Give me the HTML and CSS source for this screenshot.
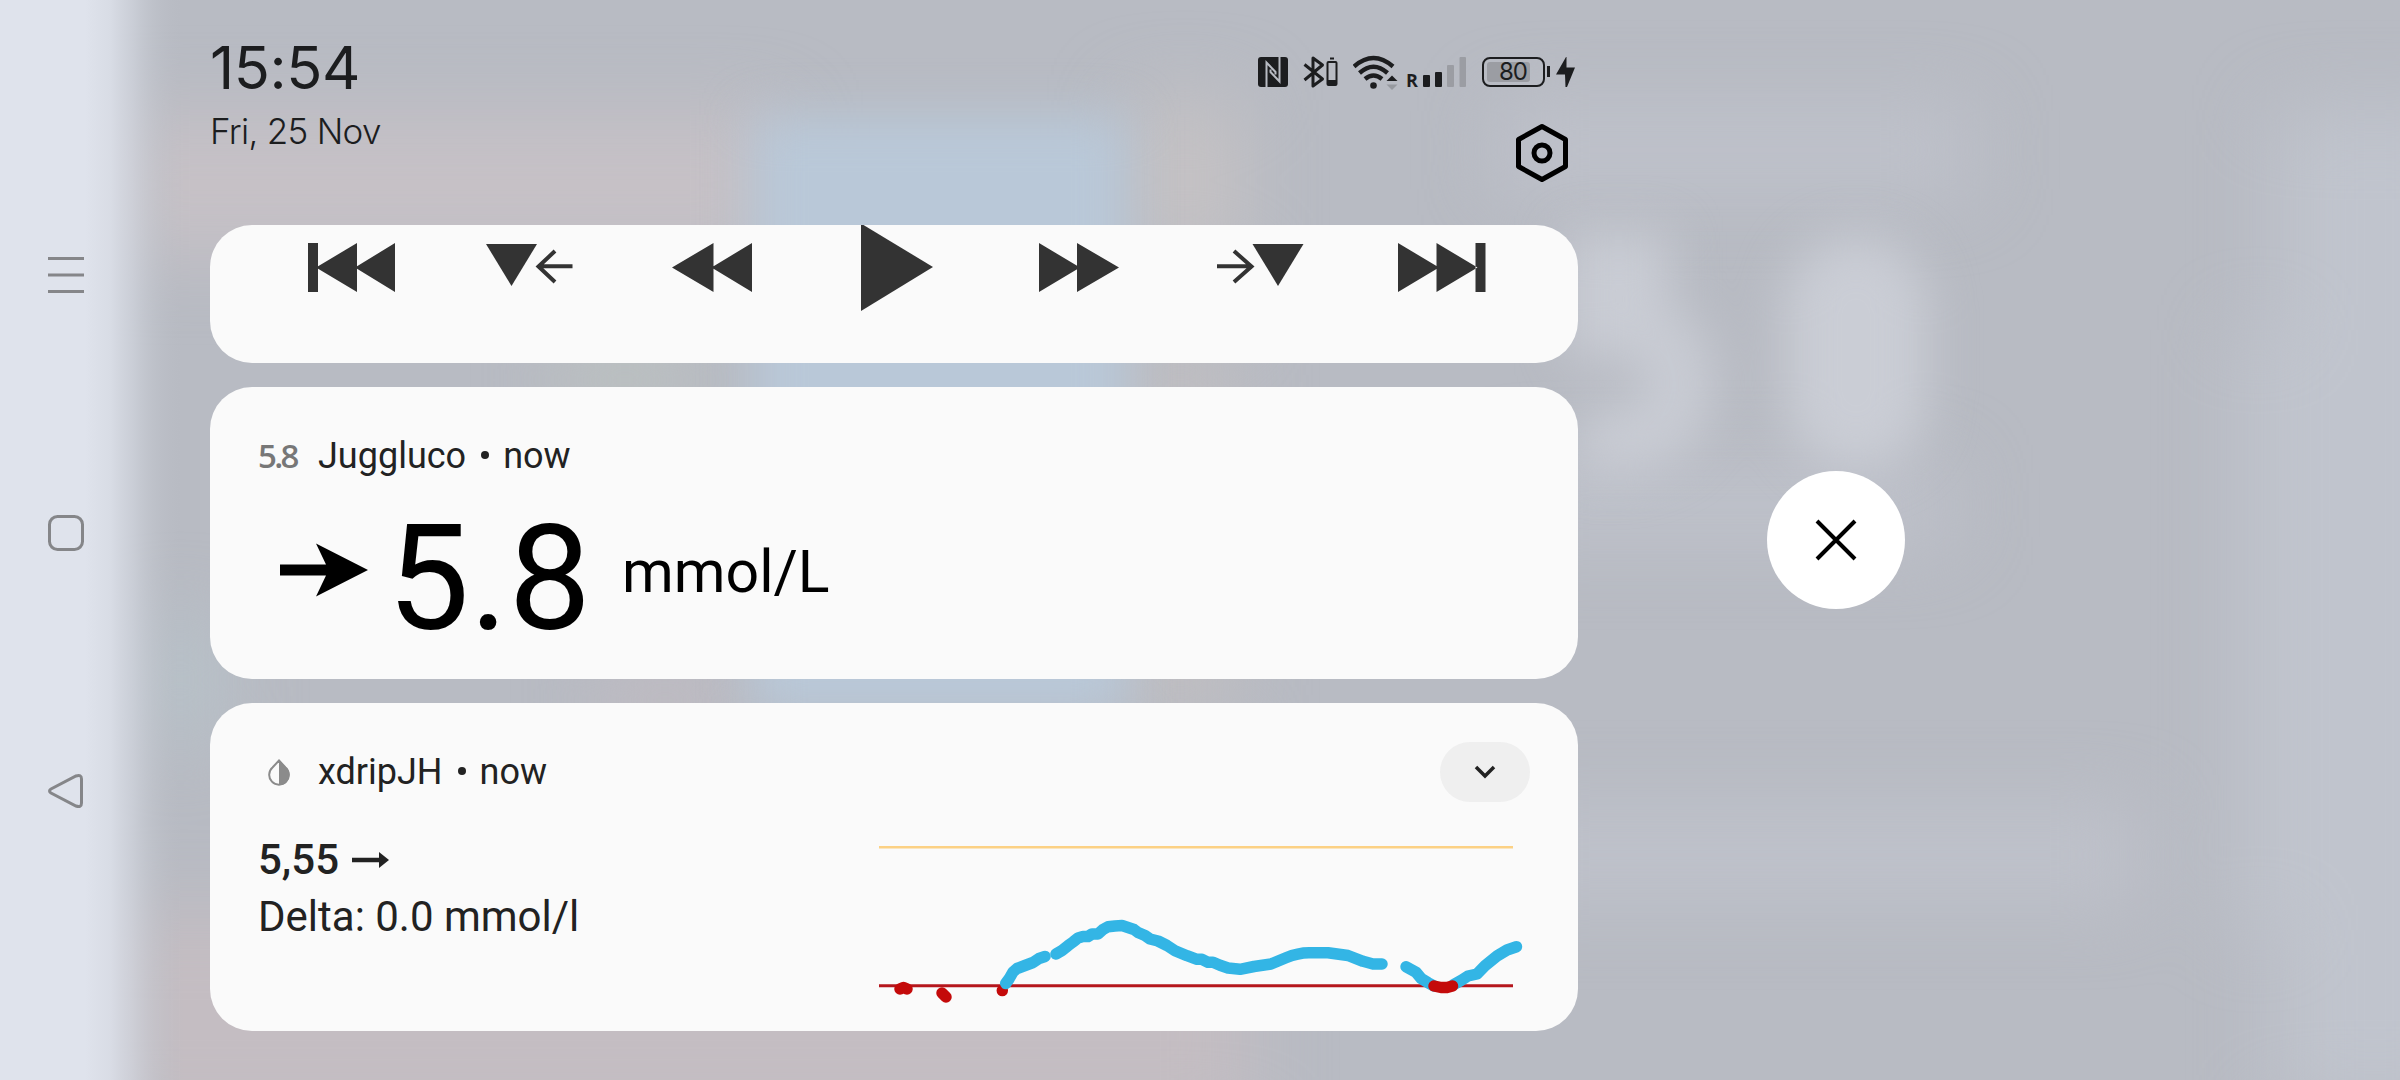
FILE: index.html
```
<!DOCTYPE html>
<html lang="en">
<head>
<meta charset="utf-8">
<title>Notifications</title>
<link rel="stylesheet" href="styles.css">
</head>
<body>
<svg class="wallpaper" viewBox="0 0 2400 1080" aria-hidden="true">
  <defs>
    <filter id="soft" filterUnits="userSpaceOnUse" x="-200" y="-200" width="2800" height="1480" color-interpolation-filters="sRGB"><feGaussianBlur stdDeviation="38"/></filter>
    <filter id="mid" filterUnits="userSpaceOnUse" x="-200" y="-200" width="2800" height="1480" color-interpolation-filters="sRGB"><feGaussianBlur stdDeviation="24"/></filter>
    <linearGradient id="edge"><stop offset="0" stop-color="#dfe3ec"/><stop offset=".46" stop-color="#dfe3ec"/><stop offset=".6" stop-color="#dbdfe8" stop-opacity=".92"/><stop offset=".72" stop-color="#d2d6df" stop-opacity=".7"/><stop offset=".85" stop-color="#c4c8d0" stop-opacity=".4"/><stop offset="1" stop-color="#b8bbc3" stop-opacity="0"/></linearGradient>
  </defs>
  <rect width="2400" height="1080" fill="#b8bbc3"/>
  <g filter="url(#soft)">
    <rect x="100" y="115" width="680" height="140" fill="#c6c1c6"/>
    <rect x="90" y="910" width="1160" height="220" fill="#c4bdc2"/>
    <rect x="1130" y="100" width="110" height="160" fill="#c5c2c4"/>
    <rect x="1130" y="340" width="100" height="380" fill="#c0bec1"/>
    <rect x="560" y="350" width="130" height="60" fill="#bcc2bf"/>
    <rect x="600" y="670" width="130" height="60" fill="#c1bbc1"/>
    <rect x="140" y="620" width="80" height="120" fill="#b7c2c9"/>
    <rect x="2275" y="110" width="200" height="1000" fill="#c0c4cd"/>
    <rect x="2240" y="330" width="200" height="600" fill="#c0c4cd"/>
    <rect x="1500" y="110" width="470" height="80" fill="#bfc2cb"/>
    <rect x="1500" y="810" width="640" height="90" fill="#bfc2cb"/>
    <rect x="1500" y="470" width="450" height="70" fill="#bfc2cb"/>
  </g>
  <g filter="url(#mid)">
    <rect x="752" y="115" width="376" height="600" fill="#b9c8d8"/>
    <path d="M1670 265H1600V325Q1680 320 1680 385T1580 440" fill="none" stroke="#c9ccd4" stroke-width="66"/>
    <rect x="1785" y="235" width="142" height="235" rx="70" fill="#cacdd5"/>
  </g>
  <rect width="184" height="1080" fill="url(#edge)"/>
</svg>

<div class="screen">
  <nav class="navbar">
    <svg class="nav-icon" viewBox="0 0 36 36"><path d="M0 1.5H36M0 18H36M0 34.5H36"/></svg>
    <svg class="nav-icon" viewBox="0 0 36 36"><rect x="1.5" y="1.5" width="33" height="33" rx="8"/></svg>
    <svg class="nav-icon" viewBox="0 0 36 36"><path d="M3 16Q0 18 3 20L28 33Q33.500 35 33.500 30V6Q33.500 1 28 3Z"/></svg>
  </nav>

  <main class="shade">
    <header class="header">
      <div>
        <div class="clock">15:54</div>
        <div class="date">Fri, 25 Nov</div>
      </div>
      <div class="header-side">
        <div class="status">
          <svg class="nfc" width="30" height="30" viewBox="0 0 30 30"><rect width="30" height="30" rx="3" fill="#1c1d1f"/><path d="M8.500 30V5.500L17.500 15V17.500M21.500 0V24.500L12.500 15V12.500" fill="none" stroke="#b8bbc3" stroke-width="2"/></svg>
          <svg class="bt" width="35" height="34" viewBox="0 0 35 34"><path d="M1.500 9.500L19.500 24 10 31V3L19.500 10 1.500 25" fill="none" stroke="#1c1d1f" stroke-width="3" stroke-linejoin="round"/><path d="M27 3.500h4" stroke="#1c1d1f" stroke-width="2"/><rect x="24.500" y="7" width="9" height="23" rx="1" fill="none" stroke="#1c1d1f" stroke-width="2"/><path d="M24.500 25h9v5h-9z" fill="#1c1d1f"/></svg>
          <svg class="wifi" width="45" height="35" viewBox="0 0 45 35"><g fill="none" stroke="#1c1d1f" stroke-width="4.400"><path d="M1 11.500Q20.500-5.500 40 11.500"/><path d="M6.500 18Q20.500 5.500 34.500 18"/><path d="M12 24Q20.500 17 29 24"/></g><circle cx="20.500" cy="30.500" r="3.300" fill="#1c1d1f"/><path d="M33.500 26l5.500-5.500 5.500 5.500z" fill="#1c1d1f"/><path d="M33.500 29.500h11L39 35z" fill="#96999f"/></svg>
          <span class="roaming">R</span>
          <svg class="signal" width="44" height="30" viewBox="0 0 44 30"><g fill="#1c1d1f"><rect x="0" y="18" width="7" height="12" rx="1"/><rect x="12" y="15" width="7" height="15" rx="1"/></g><g fill="#9b9da3"><rect x="24" y="8" width="7" height="22" rx="1"/><rect x="36.500" y="0" width="6.500" height="30" rx="1"/></g></svg>
          <span class="battery"><span class="battery-level">80</span></span>
          <svg width="20" height="32" viewBox="0 0 20 32"><path d="M10 1L0 18.500H9L9.500 31H11L19 11.500H10.500V1Z" fill="#1c1d1f"/></svg>
        </div>
        <svg class="gear" width="54" height="60" viewBox="0 0 54 60"><path d="M27 3.500L50.500 16.500V43.500L27 56.500 3.500 43.500V16.500Z"/><circle cx="27" cy="30" r="8"/></svg>
      </div>
    </header>

    <section class="card media">
      <svg width="87" height="49" viewBox="308 243 87 49"><path d="M308 243h10v49h-10zM316 267.500L357 243v49zM355 267.500L395 243v49z"/></svg>
      <svg class="mark-back" width="87" height="49" viewBox="486 243 87 49"><path d="M486 244h51l-25.500 42z"/><path class="line" d="M572.500 266.300H539M555 251L538.500 266.500 555 282"/></svg>
      <svg class="rewind" width="80" height="49" viewBox="672 243 80 49"><path d="M672 267.500L713.500 243v49zM711.500 267.500L752 243v49z"/></svg>
      <svg class="play" width="72" height="88" viewBox="861.500 223 72 88"><path d="M861.500 223.500V311L933.500 267z"/></svg>
      <svg width="80" height="49" viewBox="1038 243 80 49"><path d="M1038 243v49L1079 267.500zM1076 243v49L1118 267.500z"/></svg>
      <svg width="87" height="49" viewBox="1217 243 87 49"><path d="M1252.500 244h51L1278 286z"/><path class="line" d="M1217 266.300H1251M1234 251L1251.500 266.500 1234 282"/></svg>
      <svg width="88" height="49" viewBox="1398 243 88 49"><path d="M1398 243v49L1439 267.500zM1436.500 243v49L1477.500 267.500zM1475.500 243h10v49h-10z"/></svg>
    </section>

    <section class="card glucose">
      <div class="card-head"><span class="mini">5.8</span><span>Juggluco</span><i class="dot"></i><span>now</span></div>
      <div class="reading">
        <svg width="88" height="54" viewBox="0 0 88 54"><path d="M0 21.500H46L36 0.500 88 27 36 53.500 46 32.500H0Z"/></svg>
        <span class="value">5.8</span>
        <span class="unit">mmol/L</span>
      </div>
    </section>

    <section class="card xdrip">
      <div class="xdrip-text">
        <div class="card-head">
          <span class="drop"><svg width="22" height="27" viewBox="0 0 22 27"><path d="M11 1.500L17.500 8.500A9.800 9.800 0 1 1 4.500 8.500Z" fill="none" stroke="#8b8b8b" stroke-width="2"/><path d="M11 1L18 8.500A10 10 0 0 1 11 26Z" fill="#8b8b8b"/></svg></span>
          <span>xdripJH</span><i class="dot"></i><span>now</span>
        </div>
        <div class="level">5,55 <svg width="37" height="16" viewBox="0 0 37 16"><path d="M0 5.800H27V0L37 8 27 16V10.200H0Z"/></svg></div>
        <div class="delta">Delta: 0.0 mmol/l</div>
      </div>
      <div class="xdrip-side">
        <button class="expand" aria-label="Expand"><svg width="22" height="14" viewBox="0 0 22 14"><path d="M2 2L11 11 20 2"/></svg></button>
        <svg class="chart" width="646" height="180" viewBox="879 830 646 180">
          <path d="M879 847.300H1513" stroke="#fcd184" stroke-width="2.600"/>
          <path d="M879 985.800H1513" stroke="#b5161c" stroke-width="3"/>
          <g class="low"><path d="M900 989L903.500 987.500 907 989M942 993L946 997M1002.300 990.500V990.600"/></g>
          <g class="trace">
            <path d="M1005.700 983.500L1009 979 1013 972 1017 968.500 1025 965.500 1033 962.500 1039 958.500 1045 956.500"/>
            <path d="M1056 954L1062 950.500 1068 945.700 1073 942 1078 938 1083 936.500 1088 936.500 1092 934 1098 934 1103 929.500 1108 926.800 1115 926 1122 925.500 1128 927.500 1134 929.500 1138 932.500 1145 935.500 1150 939 1158 941 1167 945.500 1175 950.700 1187 955.700 1197 959.300 1202 959.300 1208 962.300 1213 962.300 1220 965.300 1228 968 1240 969.300 1254 966.500 1271 964 1286 957.800 Q1298 952.700 1309 952.700H1328L1348 955.500 1363 961.300 1373 964H1382"/>
            <path d="M1406 966.700L1416 972.300 1421 978.300 1428 982.700 1434 986M1453 985L1461 980.500 1468 976 1477 974 1485 965.700 1497 956 1507 950 1516.500 946.700"/>
          </g>
          <path class="low" d="M1434 986L1441 987.500H1447L1452.500 986"/>
        </svg>
      </div>
    </section>
  </main>

  <aside class="clear-area">
    <button class="clear" aria-label="Clear all"><svg width="42" height="42" viewBox="0 0 42 42"><path d="M2 2L40 40M40 2L2 40"/></svg></button>
  </aside>
</div>
</body>
</html>
```
FILE: styles.css
```
* { box-sizing: border-box; }
body { margin: 0; width: 2400px; height: 1080px; overflow: hidden; background: #b8bbc3; font-family: Roboto, sans-serif; color: #222; }
svg { display: block; flex: none; }
button { border: 0; padding: 0; display: flex; align-items: center; justify-content: center; }
.wallpaper { position: absolute; inset: 0; width: 2400px; height: 1080px; z-index: -1; }
.screen { display: flex; height: 1080px; }

.navbar { width: 210px; padding: 257px 0 271px 48px; display: flex; flex-direction: column; justify-content: space-between; }
.nav-icon { width: 36px; height: 36px; fill: none; stroke: #858689; stroke-width: 3; stroke-linecap: round; }

.shade { width: 1368px; display: flex; flex-direction: column; gap: 24px; }
.header { height: 201px; display: flex; justify-content: space-between; font-family: Inter, sans-serif; color: #1c1d1f; }
.clock { margin-top: 30px; font-size: 59.500px; line-height: 74px; font-weight: 400; letter-spacing: -0.4px; }
.date { margin-top: 5px; font-size: 35px; line-height: 44px; font-weight: 350; letter-spacing: -0.7px; }
.header-side { display: flex; flex-direction: column; align-items: flex-end; }
.status { display: flex; align-items: center; margin: 55px 2px 0 0; height: 34px; }
.bt { margin-left: 15px; }
.wifi { margin-left: 15px; margin-right: -1px; }
.roaming { width: 10px; margin: 16px 7px 0 9px; font: 700 18px/18px "Open Sans", sans-serif; }
.battery { width: 63px; height: 30px; margin: 0 11px 0 15px; padding: 3px; border: 2.500px solid #1c1d1f; border-radius: 8px; position: relative; }
.battery::after { content: ""; position: absolute; right: -7px; top: 7px; width: 3px; height: 11px; background: #1c1d1f; }
.battery-level { display: block; width: 43px; height: 20px; border-radius: 3px; background: #9b9da3; font-size: 24px; line-height: 20px; text-align: right; padding-right: 3px; letter-spacing: -1px; }
.gear { margin: 34px 9px 0 0; fill: none; stroke: #000; stroke-width: 5; stroke-linejoin: round; }

.card { background: #fafafa; border-radius: 42px; overflow: hidden; flex: none; }
.media { height: 138px; padding: 18px 45px 0 51px; display: grid; grid-template-columns: repeat(7, 1fr); justify-items: center; align-items: start; }
.media svg { fill: #333; }
.media .mark-back { margin-right: 9px; }
.media .rewind { margin-right: 6px; }
.media .play { margin-top: -20px; }
.media .line { fill: none; stroke: #333; stroke-width: 4; }

.card-head { display: flex; align-items: center; height: 42px; font-size: 36px; line-height: 42px; }
.dot { width: 8px; height: 8px; border-radius: 50%; background: #222; margin: -2px 14px 0 15px; }
.mini { width: 60px; font: 600 33px/42px "Open Sans", sans-serif; letter-spacing: -2.700px; color: #777; }
.glucose { height: 292px; padding: 48px 48px 0; color: #222; }
.reading { display: flex; align-items: center; height: 172px; padding: 14px 0 0 22px; color: #000; }
.reading svg { margin-top: -1px; }
.value { font-size: 147px; line-height: 172px; margin: 18px 0 0 19px; }
.unit { font-size: 59px; line-height: 70px; margin: 3px 0 0 31px; }

.xdrip { height: 328px; display: flex; justify-content: space-between; padding: 0 48px; }
.xdrip-text { padding-top: 48px; }
.drop { width: 60px; padding: 1px 0 0 10px; }
.level { display: flex; align-items: center; gap: 13px; margin-top: 42px; font-size: 42px; line-height: 50px; font-weight: 500; }
.level svg { fill: #222; }
.delta { margin-top: 7px; font-size: 42px; line-height: 50px; }
.xdrip-side { display: flex; flex-direction: column; align-items: flex-end; padding-top: 39px; }
.expand { width: 90px; height: 60px; border-radius: 30px; background: #efefef; }
.expand path { fill: none; stroke: #222; stroke-width: 3.500; }
.chart { margin: 28px 5px 0 0; fill: none; }
.trace, .low { stroke: #33b5e5; stroke-width: 11.500; stroke-linecap: round; stroke-linejoin: round; }
.low { stroke: #c40a0a; }

.clear-area { flex: 1; display: flex; align-items: center; padding-left: 189px; }
.clear { width: 138px; height: 138px; border-radius: 50%; background: #fff; }
.clear path { fill: none; stroke: #000; stroke-width: 4; }
```
